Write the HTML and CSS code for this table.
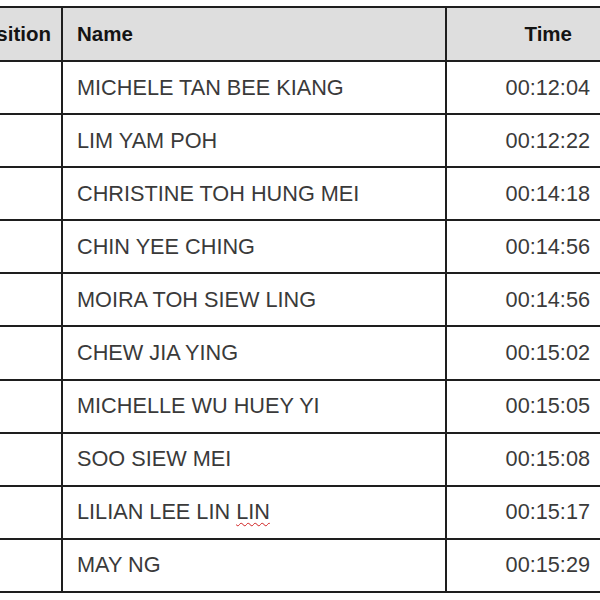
FILE: index.html
```html
<!DOCTYPE html>
<html>
<head>
<meta charset="utf-8">
<link rel="stylesheet" href="styles.css">
</head>
<body>
<div class="results">
  <div class="cell head pos"><span>Position</span></div>
  <div class="cell head name"><span>Name</span></div>
  <div class="cell head time"><span>Time</span></div>

  <div class="cell pos"></div><div class="cell name"><span>MICHELE TAN BEE KIANG</span></div><div class="cell time"><span>00:12:04</span></div>
  <div class="cell pos"></div><div class="cell name"><span>LIM YAM POH</span></div><div class="cell time"><span>00:12:22</span></div>
  <div class="cell pos"></div><div class="cell name"><span>CHRISTINE TOH HUNG MEI</span></div><div class="cell time"><span>00:14:18</span></div>
  <div class="cell pos"></div><div class="cell name"><span>CHIN YEE CHING</span></div><div class="cell time"><span>00:14:56</span></div>
  <div class="cell pos"></div><div class="cell name"><span>MOIRA TOH SIEW LING</span></div><div class="cell time"><span>00:14:56</span></div>
  <div class="cell pos"></div><div class="cell name"><span>CHEW JIA YING</span></div><div class="cell time"><span>00:15:02</span></div>
  <div class="cell pos"></div><div class="cell name"><span>MICHELLE WU HUEY YI</span></div><div class="cell time"><span>00:15:05</span></div>
  <div class="cell pos"></div><div class="cell name"><span>SOO SIEW MEI</span></div><div class="cell time"><span>00:15:08</span></div>
  <div class="cell pos"></div><div class="cell name"><span>LILIAN LEE LIN <span class="spell">LIN</span></span></div><div class="cell time"><span>00:15:17</span></div>
  <div class="cell pos"></div><div class="cell name"><span>MAY NG</span></div><div class="cell time"><span>00:15:29</span></div>
</div>
</body>
</html>
```
FILE: styles.css
```css
html, body {
  margin: 0;
  padding: 0;
  background: #ffffff;
}
body {
  padding-top: 6px;
  overflow: hidden;
  font-family: "Liberation Sans", Arial, sans-serif;
}
.results {
  display: grid;
  grid-template-columns: 63px 384px 1fr;
  grid-template-rows: 54px repeat(10, 53.1px);
  border-top: 2px solid #1e1e1e;
}
.cell {
  display: flex;
  align-items: center;
  border-bottom: 2px solid #1e1e1e;
  font-size: 21.7px;
  color: #3a3a3a;
  white-space: nowrap;
  overflow: hidden;
  box-sizing: border-box;
}
.pos {
  border-right: 2px solid #1e1e1e;
  justify-content: flex-end;
  padding-right: 10px;
}
.name {
  border-right: 2px solid #1e1e1e;
  padding-left: 14px;
}
.time {
  justify-content: flex-end;
  padding-right: 10px;
}
.head {
  background: #dedede;
  font-weight: bold;
  color: #141414;
  font-size: 20.5px;
}
.head.time {
  padding-right: 28px;
}
.spell {
  text-decoration: underline wavy #d02020;
  text-decoration-thickness: 1px;
  text-underline-offset: 3px;
}
```
